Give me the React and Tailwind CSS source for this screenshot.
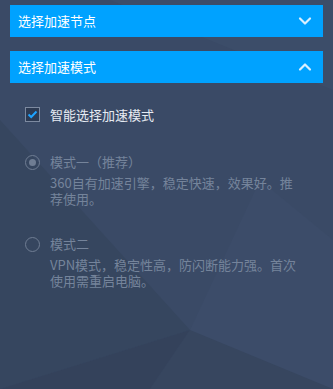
import React from "react";

const font = { fontFamily: '"Noto Sans CJK SC", "Liberation Sans", sans-serif' };

function Bar({ title, open }) {
  return (
    <div className="h-8 bg-[#00a2ff] flex items-center justify-between pl-2 pr-[11px]">
      <span className="text-[13px] text-white">{title}</span>
      <svg width="14" height="10" viewBox="0 0 14 10" fill="none">
        <path
          d={open ? "M2 7.5 L7 2.5 L12 7.5" : "M2 2.5 L7 7.5 L12 2.5"}
          stroke="#d9efff"
          strokeWidth="2.2"
          strokeLinecap="round"
          strokeLinejoin="round"
        />
      </svg>
    </div>
  );
}

function Radio({ checked }) {
  return (
    <div className="w-[15px] h-[15px] rounded-full border-[1.5px] border-[#6f7d93] flex items-center justify-center shrink-0">
      {checked && <div className="w-[7px] h-[7px] rounded-full bg-[#6f7d93]" />}
    </div>
  );
}

function Mode({ title, desc, checked }) {
  return (
    <div className="flex gap-[10px] pl-[25px] pr-[30px]">
      <div className="pt-[1px]">
        <Radio checked={checked} />
      </div>
      <div className="text-[13px] leading-[16px] text-[#75849b]">
        <div className="mb-[5px]">{title}</div>
        <div>{desc}</div>
      </div>
    </div>
  );
}

export default function App() {
  return (
    <div
      className="relative w-[333px] h-[389px] overflow-hidden bg-[#3a4a66]"
      style={font}
    >
      {/* faceted background */}
      <svg className="absolute inset-0" width="333" height="389" viewBox="0 0 333 389">
        <polygon points="0,120 190,330 0,389" fill="#36465f" />
        <polygon points="110,0 333,0 333,90" fill="#3c4d69" />
        <polygon points="190,330 250,230 333,389 150,389" fill="#37465f" />
        <polygon points="190,330 260,180 333,240 333,389" fill="#3c4c69" />
        <polygon points="0,389 190,330 150,389" fill="#34425b" />
      </svg>

      <div className="relative flex flex-col">
        <div className="px-[10px] pt-[5px] flex flex-col gap-[14px]">
          <Bar title="选择加速节点" open={false} />
          <Bar title="选择加速模式" open />
        </div>

        <div className="flex items-center gap-[10px] pl-[25px] mt-[22px]">
          <div className="w-[15px] h-[15px] border border-[#7d8aa0] bg-[#2c3a52] flex items-center justify-center">
            <svg width="11" height="9" viewBox="0 0 11 9" fill="none">
              <path d="M1.5 4.5 L4.2 7 L9.5 1.5" stroke="#1ea3ff" strokeWidth="2" />
            </svg>
          </div>
          <span className="text-[13px] text-[#e6ebf2]">智能选择加速模式</span>
        </div>

        <div className="mt-[29px]">
          <Mode
            checked
            title="模式一（推荐）"
            desc="360自有加速引擎，稳定快速，效果好。推荐使用。"
          />
        </div>
        <div className="mt-[29px]">
          <Mode
            title="模式二"
            desc="VPN模式，稳定性高，防闪断能力强。首次使用需重启电脑。"
          />
        </div>
      </div>
    </div>
  );
}
